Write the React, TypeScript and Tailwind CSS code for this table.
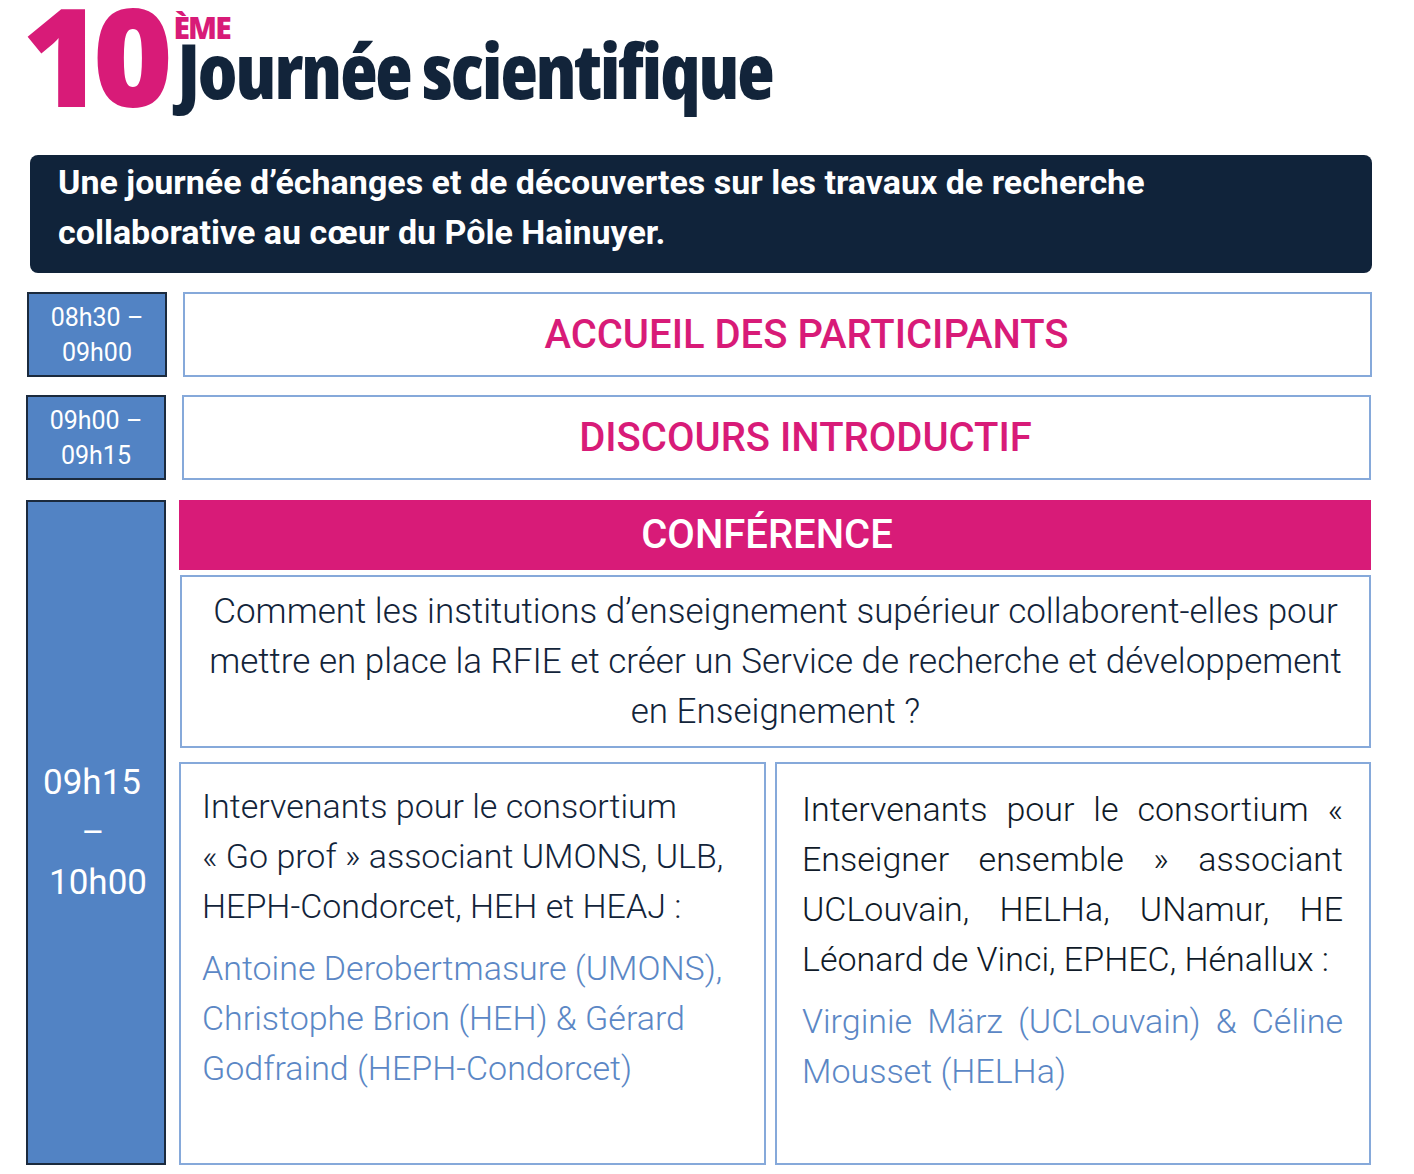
import React from "react";

const PINK = "text-[#d81b78]";

function TimeBox({ a, b }: { a: string; b: string }) {
  return (
    <div className="w-[140px] h-[85px] shrink-0 bg-[#5283c4] border-2 border-[#1b2a3d] flex flex-col items-center justify-center text-white text-[25px] leading-[35px]">
      <div>{a}</div>
      <div>{b}</div>
    </div>
  );
}

function TitleBox({ text }: { text: string }) {
  return (
    <div className={`w-[1189px] h-[85px] border-2 border-[#86a9da] pl-[58px] flex items-center justify-center ${PINK} text-[40px] font-medium`}>
      {text}
    </div>
  );
}

const J = "[text-align-last:justify] text-justify";

export default function App() {
  return (
    <div className="w-[1414px] h-[1174px] bg-white font-['Roboto'] text-[#12243a] overflow-hidden">
      {/* Header */}
      <div className="h-[155px] pl-[22px] flex items-start font-['Open_Sans']">
        <div className={`${PINK} font-extrabold text-[137px] leading-[0.8] tracking-[-0.07em] [font-stretch:100%]`}>
          10
        </div>
        <div className="ml-[14px] flex flex-col">
          <div className={`${PINK} font-extrabold text-[30px] leading-none tracking-[-0.06em] mt-[13px] ml-[-4px] [font-stretch:90%]`}>
            ÈME
          </div>
          <div className="text-[#12243a] font-extrabold text-[77px] leading-none tracking-[-0.025em] mt-[-12px] [font-stretch:75%] whitespace-nowrap">
            Journée scientifique
          </div>
        </div>
      </div>

      {/* Banner */}
      <div className="ml-[30px] w-[1342px] h-[118px] rounded-[8px] bg-[#10233a] pl-[28px] pt-[2px] text-white font-bold text-[34px] leading-[50px]">
        Une journée d’échanges et de découvertes sur les travaux de recherche
        <br />
        collaborative au cœur du Pôle Hainuyer.
      </div>

      {/* Row 1 */}
      <div className="mt-[19px] ml-[27px] flex gap-[16px]">
        <TimeBox a="08h30 –" b="09h00" />
        <TitleBox text="ACCUEIL DES PARTICIPANTS" />
      </div>

      {/* Row 2 */}
      <div className="mt-[18px] ml-[26px] flex gap-[16px]">
        <TimeBox a="09h00 –" b="09h15" />
        <TitleBox text="DISCOURS INTRODUCTIF" />
      </div>

      {/* Row 3 */}
      <div className="mt-[20px] ml-[26px] flex gap-[13px]">
        <div className="w-[140px] h-[665px] shrink-0 bg-[#5283c4] border-2 border-[#1b2a3d] flex flex-col items-center justify-center text-white text-[35px] leading-[50px]">
          <div className="mr-[8px]">09h15</div>
          <div className="mr-[6px]">–</div>
          <div className="ml-[4px]">10h00</div>
        </div>
        <div className="w-[1192px] flex flex-col">
          <div className="h-[70px] bg-[#d81b78] pr-[16px] flex items-center justify-center text-white text-[40px] font-medium">
            CONFÉRENCE
          </div>
          <div className="mt-[5px] ml-[1px] h-[173px] border-2 border-[#86a9da] pt-[10px] text-center text-[35px] leading-[50px] font-light whitespace-nowrap">
            Comment les institutions d’enseignement supérieur collaborent-elles pour
            <br />
            mettre en place la RFIE et créer un Service de recherche et développement
            <br />
            en Enseignement ?
          </div>
          <div className="mt-[14px] flex gap-[9px] h-[403px]">
            <div className="w-[587px] border-2 border-[#86a9da] pl-[21px] pt-[17px] text-[34px] leading-[50px] font-light whitespace-nowrap">
              <div>
                Intervenants pour le consortium
                <br />« Go prof » associant UMONS, ULB,
                <br />
                HEPH-Condorcet, HEH et HEAJ :
              </div>
              <div className="mt-[12px] text-[#5b87c5]">
                Antoine Derobertmasure (UMONS),
                <br />
                Christophe Brion (HEH) &amp; Gérard
                <br />
                Godfraind (HEPH-Condorcet)
              </div>
            </div>
            <div className="w-[596px] border-2 border-[#86a9da] pl-[25px] pr-[26px] pt-[20px] text-[34px] leading-[50px] font-light text-[#0f1a28]">
              <div>
                <div className={J}>Intervenants pour le consortium «</div>
                <div className={J}>Enseigner ensemble » associant</div>
                <div className={J}>UCLouvain, HELHa, UNamur, HE</div>
                <div className="whitespace-nowrap">Léonard de Vinci, EPHEC, Hénallux :</div>
              </div>
              <div className="mt-[12px] text-[#5b87c5]">
                <div className={J}>Virginie März (UCLouvain) &amp; Céline</div>
                <div>Mousset (HELHa)</div>
              </div>
            </div>
          </div>
        </div>
      </div>
    </div>
  );
}
